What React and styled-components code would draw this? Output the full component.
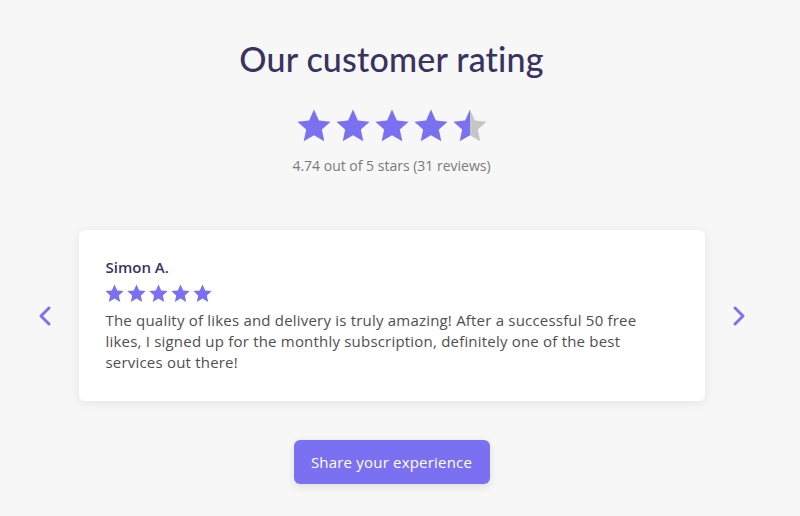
import React from 'react'
import styled, { createGlobalStyle } from 'styled-components'

const GlobalStyle = createGlobalStyle`
  html, body {
    margin: 0;
    padding: 0;
    background: #f7f7f7;
  }
  body {
    font-family: "Open Sans", "Liberation Sans", sans-serif;
  }
`;

const STAR = 'M12 1.6l3.09 6.86 7.41.78-5.55 5.02 1.56 7.34L12 17.85 5.49 21.6l1.56-7.34L1.5 9.24l7.41-.78z'

function Star({ size, fill = 1, id }) {
  if (fill >= 1) {
    return (
      <svg width={size} height={size} viewBox="0 0 24 24">
        <path d={STAR} fill="#7b6ff2" />
      </svg>
    )
  }
  return (
    <svg width={size} height={size} viewBox="0 0 24 24">
      <defs>
        <linearGradient id={id}>
          <stop offset={fill} stopColor="#7b6ff2" />
          <stop offset={fill} stopColor="#c6c6c6" />
        </linearGradient>
      </defs>
      <path d={STAR} fill={`url(#${id})`} />
    </svg>
  )
}

function Chevron({ left }) {
  return (
    <svg width="20" height="24" viewBox="0 0 20 24">
      <path
        d={left ? 'M14 4L6 12l8 8' : 'M6 4l8 8-8 8'}
        fill="none"
        stroke="#7b6ff2"
        strokeWidth="3"
        strokeLinecap="round"
        strokeLinejoin="round"
      />
    </svg>
  )
}

function App() {
  const rating = [1, 1, 1, 1, 0.5]
  return (
    <>
      <GlobalStyle />
      <Page>
        <Title>Our customer rating</Title>
        <BigStars>
          {rating.map((f, i) => (
            <Star key={i} size={38} fill={f} id={`big-${i}`} />
          ))}
        </BigStars>
        <Summary>4.74 out of 5 stars (31 reviews)</Summary>
        <Slider>
          <Arrow><Chevron left /></Arrow>
          <Card>
            <Name>Simon A.</Name>
            <SmallStars>
              {[0, 1, 2, 3, 4].map(i => <Star key={i} size={21} />)}
            </SmallStars>
            <Review>
              The quality of likes and delivery is truly amazing! After a successful 50 free
              likes, I signed up for the monthly subscription, definitely one of the best
              services out there!
            </Review>
          </Card>
          <Arrow><Chevron /></Arrow>
        </Slider>
        <ShareButton>Share your experience</ShareButton>
      </Page>
    </>
  )
}

export default App

const Page = styled.div`
  width: 783px;
  height: 516px;
  display: flex;
  flex-direction: column;
  align-items: center;
  box-sizing: border-box;
  padding-top: 39px;
`;

const Title = styled.h1`
  margin: 0;
  font-family: "Lato", sans-serif;
  font-weight: 500;
  font-size: 34px;
  line-height: 40px;
  color: #38335f;
  letter-spacing: 0.2px;
`;

const BigStars = styled.div`
  display: flex;
  gap: 1px;
  margin-top: 28px;
`;

const Summary = styled.div`
  margin-top: 11px;
  font-size: 14px;
  color: #7a7a7a;
`;

const Slider = styled.div`
  display: flex;
  align-items: center;
  gap: 19px;
  margin-top: 55px;
`;

const Arrow = styled.div`
  width: 30px;
  display: flex;
  justify-content: center;
  cursor: pointer;
`;

const Card = styled.div`
  width: 626px;
  height: 171px;
  box-sizing: border-box;
  padding: 27px 27px;
  background: #fff;
  border-radius: 6px;
  box-shadow: 0 2px 12px rgba(0, 0, 0, 0.08);
`;

const Name = styled.div`
  font-weight: 600;
  font-size: 15px;
  line-height: 20px;
  color: #38335f;
`;

const SmallStars = styled.div`
  display: flex;
  gap: 1px;
  margin: 6px 0 6px -2px;
`;

const Review = styled.p`
  margin: 0;
  max-width: 535px;
  font-size: 15px;
  letter-spacing: 0.2px;
  line-height: 21px;
  color: #4f4f4f;
`;

const ShareButton = styled.button`
  margin-top: 39px;
  width: 196px;
  height: 44px;
  border: none;
  border-radius: 6px;
  background: #7b6ff2;
  color: #fff;
  font-family: "Open Sans", sans-serif;
  font-size: 15px;
  letter-spacing: 0.2px;
  box-shadow: 0 3px 8px rgba(0, 0, 0, 0.1);
  cursor: pointer;
`;
